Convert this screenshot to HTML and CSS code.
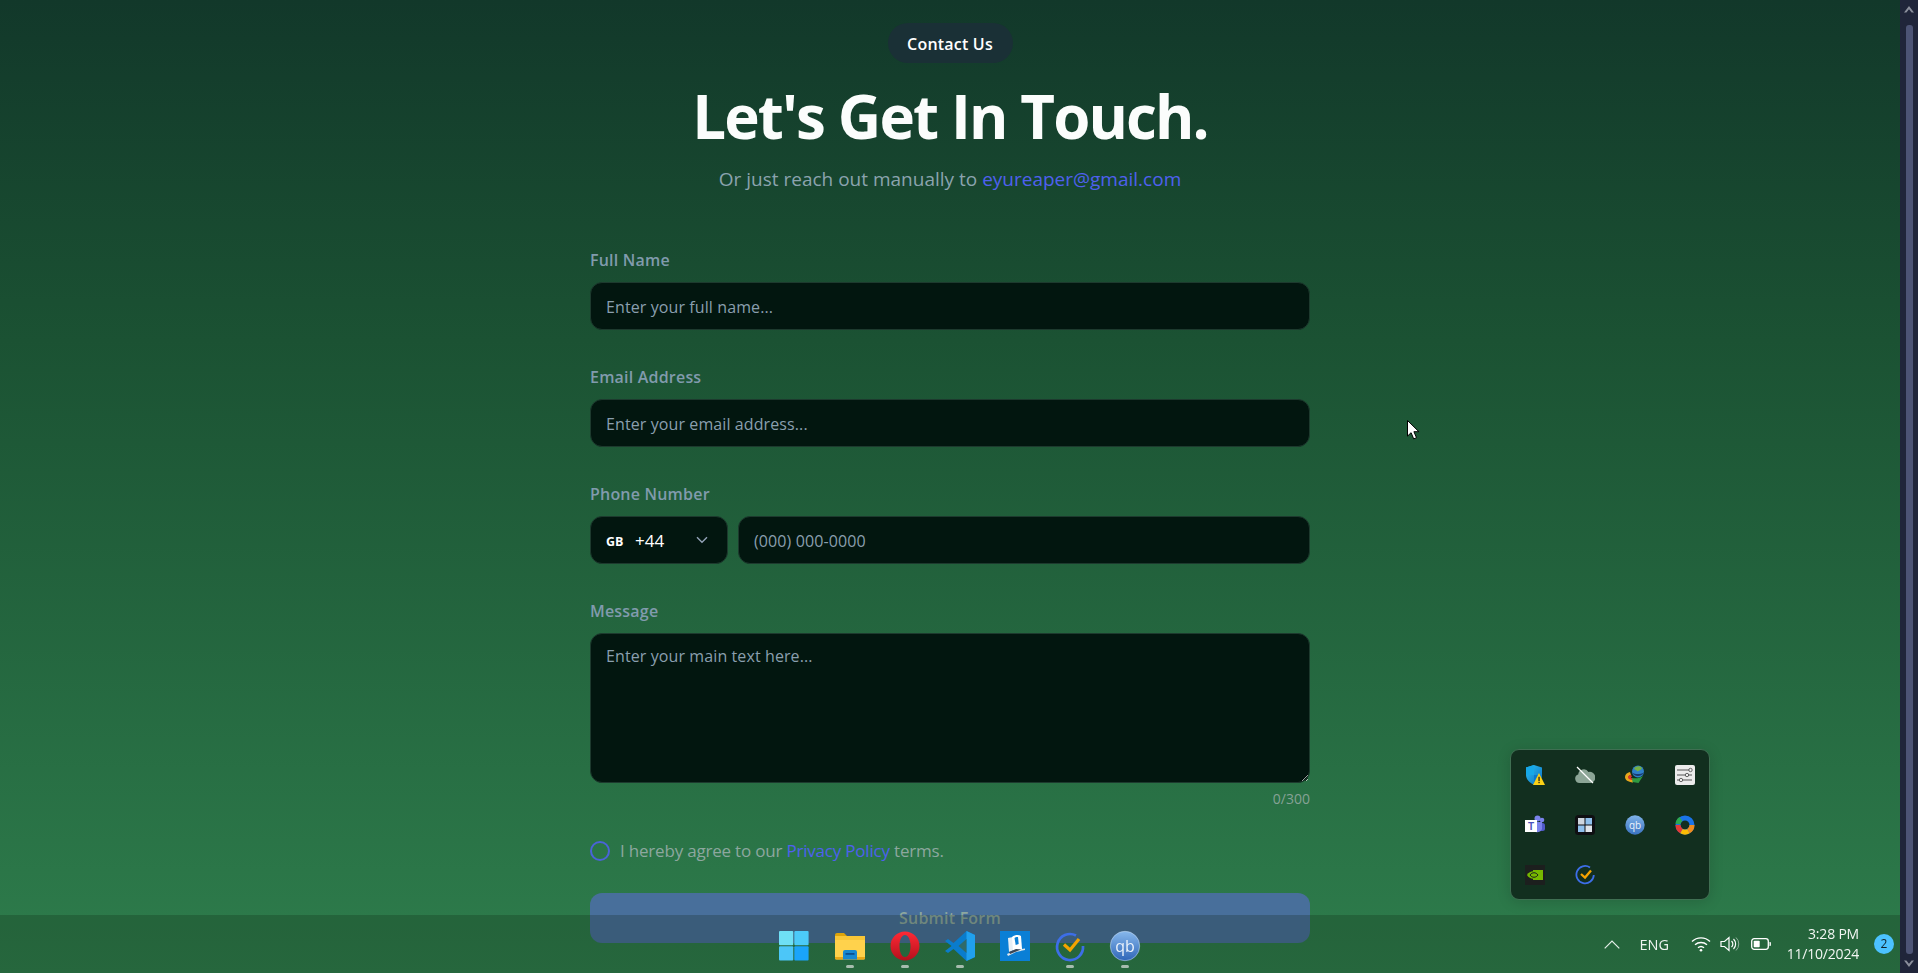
FILE: index.html
```html
<!DOCTYPE html>
<html lang="en">
<head>
<meta charset="utf-8">
<title>Contact Us</title>
<link rel="stylesheet" href="styles.css">
</head>
<body>
<div class="window">
  <main class="page">
    <span class="pill">Contact Us</span>
    <h1 class="title">Let's Get In Touch.</h1>
    <p class="subtitle">Or just reach out manually to <a class="link" href="#">eyureaper@gmail.com</a></p>
    <form class="form">
      <div class="field">
        <label class="label" for="name">Full Name</label>
        <input class="input" id="name" type="text" placeholder="Enter your full name...">
      </div>
      <div class="field">
        <label class="label" for="email">Email Address</label>
        <input class="input" id="email" type="text" placeholder="Enter your email address...">
      </div>
      <div class="field">
        <label class="label" for="phone">Phone Number</label>
        <div class="phone-row">
          <div class="country">
            <span class="country-code">GB</span>
            <span class="country-dial">+44</span>
            <svg class="country-chevron" viewBox="0 0 12 8" width="12" height="8"><path d="M1 1.2l5 5 5-5" fill="none" stroke="#94a3b8" stroke-width="1.4"/></svg>
          </div>
          <input class="input phone-input" id="phone" type="text" placeholder="(000) 000-0000">
        </div>
      </div>
      <div class="field field-message">
        <label class="label" for="msg">Message</label>
        <textarea class="input textarea" id="msg" placeholder="Enter your main text here..."></textarea>
        <div class="counter">0/300</div>
      </div>
      <div class="agree">
        <span class="radio"></span>
        <span>I hereby agree to our <a class="link" href="#">Privacy Policy</a> terms.</span>
      </div>
      <button class="submit" type="button">Submit Form</button>
    </form>
  </main>
  <aside class="scrollbar">
    <svg viewBox="0 0 10 7" width="10" height="7"><path d="M5 0l5 6.5H7.6L5 3.2 2.4 6.5H0z" fill="#8b8f9c"/></svg>
    <div class="thumb"></div>
    <svg viewBox="0 0 10 7" width="10" height="7"><path d="M5 7L0 .5h2.4L5 3.8 7.6.5H10z" fill="#8b8f9c"/></svg>
  </aside>
</div>

<svg class="cursor" viewBox="0 0 13 20" width="13" height="20"><path d="M.5.5v15.6l3.6-3.4 2.6 6.2 2.8-1.2-2.6-6h5z" fill="#fff" stroke="#000" stroke-width="1"/></svg>

<div class="tray-popup">
  <svg class="tray-icon" viewBox="0 0 20 20"><defs><linearGradient id="sh" x1="0" y1="0" x2="1" y2="1"><stop offset="0" stop-color="#2cc0f0"/><stop offset="1" stop-color="#0a6fc4"/></linearGradient></defs><path d="M9 0l8 2.500v7.500c0 4.500-3.500 7.500-8 10-4.500-2.500-8-5.500-8-10V2.500z" fill="url(#sh)"/><path d="M9 0v10H1V2.500z" fill="#16a8e8"/><path d="M9 10h8c0 4.500-3.500 7.500-8 10z" fill="#0a78cc"/><path d="M14 8l6 12H8z" fill="#fcd116"/><rect x="13.400" y="11.800" width="1.300" height="4.200" fill="#222"/><rect x="13.400" y="16.800" width="1.300" height="1.400" fill="#222"/></svg>
  <svg class="tray-icon" viewBox="0 0 20 20"><path d="M4.500 18a4.300 4.300 0 0 1-1.300-8.400A5.600 5.600 0 0 1 13.500 7a5.500 5.500 0 0 1 2.500 11z" fill="#8ca596"/><path d="M2 2l16 16" stroke="#fff" stroke-width="1.200"/></svg>
  <svg class="tray-icon" viewBox="0 0 20 20"><path d="M8 17.500C3 17 0 15 0 12c0-2.500 2-4.500 5-5l1 3c-1.500.3-2.500 1-2.500 2 0 1.500 2 2.500 5 2.500z" fill="#e9a81c"/><path d="M8 15C5 15 3 14 3 12.300c0-1.300 1.300-2.200 3-2.500l1 2c-.7 0-1 .3-1 .6 0 .5.800.8 2 .8z" fill="#d9352a"/><path d="M7 13c4 .8 8 0 11-2l-4.500 7-6-1z" fill="#2f9a40"/><circle cx="13" cy="6.500" r="6" fill="#2f7fc8"/><path d="M9 3.500c2-2.500 6-3 8-.5-1 2.500-3 2-4.500 3.500-1-1.500-2.500-1.500-3.500-3z" fill="#75b045"/><path d="M7 7.500c3 2 8 2.200 12 0-2 4.500-10 4.500-12 0z" fill="#1a3a70"/></svg>
  <svg class="tray-icon" viewBox="0 0 20 20"><rect width="20" height="20" rx="2" fill="#ececec"/><path d="M2 5h15M2 10h15M2 15h15" stroke="#555" stroke-width="1"/><circle cx="15.500" cy="5" r="1.700" fill="#eee" stroke="#444" stroke-width=".8"/><circle cx="12" cy="10" r="1.700" fill="#eee" stroke="#444" stroke-width=".8"/><circle cx="6" cy="15" r="1.700" fill="#eee" stroke="#444" stroke-width=".8"/></svg>

  <svg class="tray-icon" viewBox="0 0 20 20"><circle cx="17" cy="5" r="2.300" fill="#7b83eb"/><circle cx="12.500" cy="3.500" r="3" fill="#7b83eb"/><rect x="14" y="8" width="6" height="8" rx="2.500" fill="#5059c9"/><path d="M7 7h10v7a5.500 5.500 0 0 1-10 0z" fill="#7b83eb"/><rect y="5" width="12" height="12" fill="#fff"/><text class="teams-t" x="6" y="15">T</text></svg>
  <svg class="tray-icon" viewBox="0 0 20 20"><rect width="20" height="20" rx="3.500" fill="#0f0f12"/><rect x="3" y="3" width="6.500" height="6.500" fill="#cfd6de"/><path d="M10.500 3H17v6.500h-6.500z" fill="#8fc0ec"/><path d="M3 10.500h6.500V17H3z" fill="#8fc0ec"/><rect x="10.500" y="10.500" width="6.500" height="6.500" fill="#dfe4ea"/></svg>
  <svg class="tray-icon" viewBox="0 0 20 20"><defs><linearGradient id="qb1" x1="0" y1="0" x2="0" y2="1"><stop offset="0" stop-color="#7fb2e8"/><stop offset="1" stop-color="#3a72c0"/></linearGradient></defs><circle cx="10" cy="10" r="9.700" fill="url(#qb1)"/><text class="qb-text" x="10" y="14">qb</text></svg>
  <svg class="tray-icon" viewBox="0 0 20 20"><circle cx="10" cy="10" r="7" fill="none" stroke="#1a73e8" stroke-width="5"/><path d="M3 10a7 7 0 0 0 3.500 6.100" fill="none" stroke="#e53935" stroke-width="5"/><path d="M6.500 16.100a7 7 0 0 0 7 0" fill="none" stroke="#fbbc04" stroke-width="5"/><path d="M13.500 16.100A7 7 0 0 0 17 10" fill="none" stroke="#f28c1c" stroke-width="5"/><path d="M2.900 9a7 7 0 0 1 3-5" fill="none" stroke="#2da94f" stroke-width="5"/></svg>

  <svg class="tray-icon" viewBox="0 0 20 20"><rect width="20" height="20" fill="#1c1f1e"/><rect x="8" y="5" width="10" height="10" fill="#76b900"/><path d="M2 10c3-5 9-5 13 0-4 5-10 5-13 0z" fill="#76b900"/><path d="M5 10c2-3 6-3 8 0-2 3-6 3-8 0z" fill="none" stroke="#1c1f1e" stroke-width="1"/></svg>
  <svg class="tray-icon" viewBox="0 0 20 20"><path d="M15 2.500A8.700 8.700 0 1 0 18.800 10" fill="none" stroke="#3d6ee8" stroke-width="1.800"/><path d="M6 9l4 3.500 6-7" fill="none" stroke="#f5a300" stroke-width="2.300"/></svg>
</div>

<footer class="taskbar">
  <div class="dock">
    <div class="dock-item">
      <svg class="dock-icon" viewBox="0 0 30 30"><rect x="-1" width="14.300" height="14.300" rx="1" fill="#6fe0f5"/><rect x="14.300" width="14.300" height="14.300" rx="1" fill="#4ccaf8"/><rect x="-1" y="15.300" width="14.300" height="14.300" rx="1" fill="#4cc6f8"/><rect x="14.300" y="15.300" width="14.300" height="14.300" rx="1" fill="#1aa4fb"/></svg>
    </div>
    <div class="dock-item is-open">
      <svg class="dock-icon" viewBox="0 0 30 30"><path d="M0 4a2 2 0 0 1 2-2h7l3 3h-12z" fill="#dca30a"/><rect y="5" width="30" height="23.500" rx="1.500" fill="#ffd24c"/><path d="M0 5h30v4H0z" fill="#f8c636"/><path d="M0 26h30v1a1.500 1.500 0 0 1-1.500 1.500H1.500A1.500 1.500 0 0 1 0 27z" fill="#e8a818"/><path d="M8 21a2 2 0 0 1 2-2h10a2 2 0 0 1 2 2v7.500H8z" fill="#1788d0"/><rect x="10.500" y="22" width="9" height="1.800" fill="#0b4f8f"/></svg>
    </div>
    <div class="dock-item is-open">
      <svg class="dock-icon" viewBox="0 0 30 30"><defs><linearGradient id="op" x1="0" y1="0" x2="0" y2="1"><stop offset="0" stop-color="#ff2a35"/><stop offset="1" stop-color="#b3101c"/></linearGradient></defs><path fill-rule="evenodd" d="M15 .5c8 0 14.500 6.500 14.500 14.500S23 29.500 15 29.500.5 23 .5 15 7 .5 15 .5zm0 3.500c-3.500 0-5.500 5-5.500 11s2 11 5.500 11 5.500-5 5.500-11-2-11-5.500-11z" fill="url(#op)"/></svg>
    </div>
    <div class="dock-item is-open">
      <svg class="dock-icon" viewBox="0 0 30 30"><path d="M21.500 0L30 4v22l-8.500 4-13-12-5.500 4-3-2 6.500-5L0 10l3-2 5.500 4z" fill="#0a7ccc"/><path d="M21.500 0L30 4v22l-8.500 4z" fill="#20a0ee"/><path d="M21.500 8v14l-8-7z" fill="#2f6a6a"/></svg>
    </div>
    <div class="dock-item">
      <svg class="dock-icon" viewBox="0 0 30 30"><rect width="30" height="30" fill="#0a7fd6"/><path d="M8 7l5-1 1 13-5 2z" fill="#e6eef5"/><path d="M12 6c3-2.500 7-2.500 9-1l1 13-9 2z" fill="#fff"/><path d="M14.500 7c1-1 2.500-1.200 3.500-1l.7 7-3 1z" fill="#0a7fd6"/><path d="M7 23l9-4 9-1.500v1.500l-9 2-8 4z" fill="#dfe7ee"/><path d="M9 21l7-3 5 .5-6 2.500-5 2z" fill="#3c4654"/></svg>
    </div>
    <div class="dock-item is-open">
      <svg class="dock-icon" viewBox="0 0 30 30"><path d="M21 4.500A13 13 0 1 0 28 15" fill="none" stroke="#3d6ee8" stroke-width="2.700"/><path d="M9 13.500l6 5.500 9-11" fill="none" stroke="#f5a300" stroke-width="3.200"/></svg>
    </div>
    <div class="dock-item is-open">
      <svg class="dock-icon" viewBox="0 0 30 30"><defs><linearGradient id="qb2" x1="0" y1="0" x2="0" y2="1"><stop offset="0" stop-color="#87b8ec"/><stop offset="1" stop-color="#2f66b8"/></linearGradient></defs><circle cx="15" cy="15" r="14.700" fill="url(#qb2)" stroke="#cfe0f5" stroke-width=".5"/><text class="qb-text qb-large" x="15" y="21">qb</text></svg>
    </div>
  </div>
  <div class="system">
    <svg class="sys-chevron" viewBox="0 0 16 9" width="16" height="9"><path d="M.7 8.300L8 1l7.300 7.300" fill="none" stroke="#e6efe9" stroke-width="1.200"/></svg>
    <span class="lang">ENG</span>
    <svg class="sys-wifi" viewBox="0 0 20 16" width="20" height="16"><g fill="none" stroke="#fff" stroke-width="1.400"><path d="M1 5.500a13 13 0 0 1 18 0"/><path d="M4 8.800a9 9 0 0 1 12 0"/><path d="M7 11.800a4.500 4.500 0 0 1 6 0"/></g><circle cx="10" cy="14.300" r="1.300" fill="#fff"/></svg>
    <svg class="sys-sound" viewBox="0 0 20 16" width="20" height="16"><path d="M1 5.500h3.500L9 1.500v13l-4.500-4H1z" fill="none" stroke="#fff" stroke-width="1.200"/><path d="M11.500 5a4 4 0 0 1 0 6" fill="none" stroke="#fff" stroke-width="1.200"/><path d="M13.500 3a7 7 0 0 1 0 10" fill="none" stroke="#fff" stroke-width="1.200"/><path d="M16 1.500a9 9 0 0 1 0 13" fill="none" stroke="#8fb09b" stroke-width="1"/></svg>
    <svg class="sys-battery" viewBox="0 0 20 12" width="20" height="12"><rect x=".7" y=".7" width="16.600" height="10.600" rx="2.500" fill="none" stroke="#fff" stroke-width="1.300"/><rect x="2.700" y="2.700" width="6" height="6.600" rx=".8" fill="#fff"/><path d="M18.500 4h.6a.8.8 0 0 1 .8.800v2.400a.8.8 0 0 1-.8.800h-.6z" fill="#fff"/></svg>
    <div class="clock"><span>3:28 PM</span><span>11/10/2024</span></div>
    <span class="badge">2</span>
  </div>
</footer>
</body>
</html>
```
FILE: styles.css
```css
* { box-sizing: border-box; }

html, body {
  margin: 0;
  height: 973px;
  overflow: hidden;
}

body {
  font-family: "Open Sans", "Noto Sans", sans-serif;
  color: #fff;
  background: #2e7b4c;
}

.window {
  display: flex;
  height: 973px;
}

.page {
  flex: 1;
  display: flex;
  flex-direction: column;
  align-items: center;
  padding-top: 23px;
  background: linear-gradient(180deg, #12382a 0%, #1b5233 35%, #2e7d4c 100%);
}

.pill {
  display: flex;
  align-items: center;
  justify-content: center;
  width: 125px;
  height: 40px;
  padding-top: 2px;
  border-radius: 20px;
  background: #1a3036;
  font-size: 16px;
  font-weight: 600;
  letter-spacing: 0.2px;
}

.title {
  margin: 17px 0 0;
  font-size: 60px;
  line-height: 72px;
  font-weight: 700;
  letter-spacing: -1.85px;
  color: #fbfdfc;
}

.subtitle {
  margin: 13px 0 0;
  font-size: 19px;
  line-height: 28px;
  color: #8ba3ae;
}

.link {
  color: #4f60ee;
  text-decoration: none;
}

.form {
  width: 720px;
  margin-top: 54.700px;
  display: flex;
  flex-direction: column;
}

.field {
  display: flex;
  flex-direction: column;
  margin-bottom: 35.100px;
}

.label {
  font-size: 16px;
  line-height: 24px;
  font-weight: 600;
  letter-spacing: 0.2px;
  color: #819bad;
  margin-bottom: 10px;
}

.input {
  height: 48px;
  width: 100%;
  padding: 2px 15px 0;
  background: #02160f;
  border: 1px solid #1d3a2e;
  border-radius: 12px;
  font-family: inherit;
  font-size: 16px;
  letter-spacing: 0.1px;
  color: #fff;
  outline: none;
}

.input::placeholder {
  color: #8a9fae;
  opacity: 1;
}

.phone-row {
  display: flex;
  gap: 10px;
}

.phone-input {
  flex: 1;
  width: auto;
}

.country {
  display: flex;
  align-items: center;
  width: 138px;
  height: 48px;
  padding-left: 15px;
  background: #02160f;
  border: 1px solid #1d3a2e;
  border-radius: 12px;
}

.country-code {
  width: 29px;
  padding-top: 3px;
  font-size: 12.500px;
  font-weight: 700;
}

.country-dial {
  width: 61px;
  padding-top: 2px;
  font-size: 17px;
}

.textarea {
  height: 150px;
  padding-top: 10px;
  line-height: 24px;
  resize: vertical;
  display: block;
}

.field-message {
  margin-bottom: 0;
}

.counter {
  margin-top: 6px;
  height: 20px;
  text-align: right;
  font-size: 14px;
  line-height: 20px;
  color: #86a295;
}

.agree {
  display: flex;
  align-items: center;
  gap: 10px;
  margin-top: 30px;
  height: 24px;
  font-size: 17px;
  letter-spacing: -0.2px;
  color: #8da79f;
}

.radio {
  width: 20px;
  height: 20px;
  border-radius: 50%;
  border: 2px solid #4a63d8;
}

.submit {
  margin-top: 30px;
  height: 50px;
  width: 100%;
  border: 0;
  border-radius: 12px;
  background: #486f9b;
  font-family: inherit;
  font-size: 16px;
  font-weight: 600;
  letter-spacing: 0.2px;
  color: #8da79f;
}

.scrollbar {
  width: 18px;
  height: 973px;
  background: #20253a;
  display: flex;
  flex-direction: column;
  align-items: center;
  justify-content: space-between;
  padding: 6px 0;
}

.thumb {
  width: 7px;
  flex: 1;
  margin: 12px 0 6px;
  border-radius: 3px;
  background: #4d5475;
}

.cursor {
  position: absolute;
  left: 1407px;
  top: 420px;
}

.tray-popup {
  position: absolute;
  left: 1510px;
  top: 749px;
  width: 200px;
  height: 151px;
  padding: 15px 14px;
  display: grid;
  grid-template-columns: repeat(4, 20px);
  grid-auto-rows: 20px;
  column-gap: 30px;
  row-gap: 30px;
  background: #122f1f;
  border: 1px solid #3f6f52;
  border-radius: 9px;
  box-shadow: 0 2px 14px rgba(0, 0, 0, 0.15);
}

.tray-icon {
  width: 20px;
  height: 20px;
  display: block;
}

.teams-t {
  font-family: "Liberation Sans", sans-serif;
  font-size: 10px;
  font-weight: 700;
  fill: #4b53bc;
  text-anchor: middle;
}

.qb-text {
  font-family: "Open Sans", sans-serif;
  font-size: 10px;
  fill: #eaf2fb;
  text-anchor: middle;
}

.qb-large {
  font-size: 16px;
}

.taskbar {
  position: fixed;
  left: 0;
  right: 18px;
  bottom: 0;
  height: 58px;
  background: rgba(11, 32, 11, 0.23);
}

.dock {
  position: absolute;
  left: 780px;
  top: 16px;
  display: flex;
  gap: 25px;
}

.dock-item {
  position: relative;
  width: 30px;
  height: 30px;
}

.dock-icon {
  display: block;
  width: 30px;
  height: 30px;
  overflow: visible;
}

.is-open::after {
  content: "";
  position: absolute;
  left: 11px;
  top: 34px;
  width: 8px;
  height: 3px;
  border-radius: 2px;
  background: #a6bcae;
}

.system {
  position: absolute;
  right: 6px;
  top: 0;
  height: 58px;
  display: flex;
  align-items: center;
  font-family: "Open Sans", sans-serif;
}

.sys-chevron { margin-right: 11.500px; }

.lang {
  width: 46px;
  text-align: center;
  font-size: 14.500px;
  color: #eef4f0;
  margin-right: 13.500px;
}

.sys-wifi { margin-right: 9px; }
.sys-sound { margin-right: 11px; }
.sys-battery { margin-right: 16px; }

.clock {
  display: flex;
  flex-direction: column;
  align-items: flex-end;
  font-size: 14px;
  line-height: 20px;
  color: #f2f6f3;
  letter-spacing: -0.2px;
}

.badge {
  width: 20px;
  height: 20px;
  margin-left: 15px;
  border-radius: 50%;
  background: #4cc2ff;
  color: #10222b;
  font-size: 12px;
  line-height: 20px;
  text-align: center;
}
```
